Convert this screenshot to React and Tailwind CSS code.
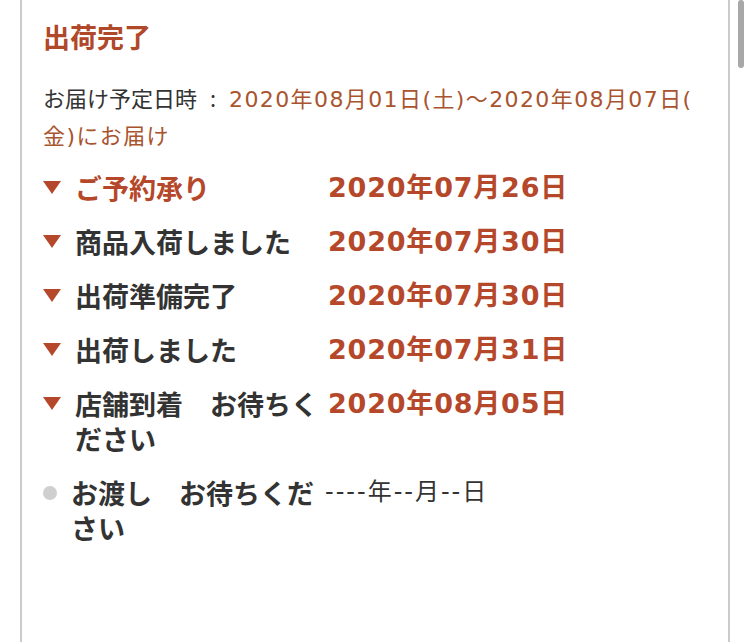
import React from "react";

const steps = [
  { label: "ご予約承り", date: "2020年07月26日", active: true, current: true },
  { label: "商品入荷しました", date: "2020年07月30日", active: true },
  { label: "出荷準備完了", date: "2020年07月30日", active: true },
  { label: "出荷しました", date: "2020年07月31日", active: true },
  { label: "店舗到着　お待ちください", date: "2020年08月05日", active: true },
  { label: "お渡し　お待ちください", date: "----年--月--日", active: false },
];

// wide latin digits first, CJK glyphs fall through to Noto
const numFont = { fontFamily: '"DejaVu Sans", "Noto Sans CJK JP", sans-serif' };

function Marker({ active }) {
  if (active) {
    return (
      <svg width="18" height="13" viewBox="0 0 18 13" className="mt-[11px] shrink-0">
        <polygon points="0,0 18,0 9,13" fill="#b5482a" />
      </svg>
    );
  }
  return <span className="mt-[11px] block h-[14px] w-[14px] shrink-0 rounded-full bg-[#cfcfcf]" />;
}

export default function App() {
  return (
    <div
      className="relative min-h-[642px] bg-white"
      style={{ fontFamily: '"Noto Sans CJK JP", "Noto Sans", sans-serif' }}
    >
      <div className="ml-[20px] min-h-[642px] w-[710px] border-x-2 border-[#cbcbcb] pl-[21px] pr-[20px]">
        <h1 className="pt-[19px] text-[27px] font-bold leading-[36px] text-[#b0482a]">出荷完了</h1>

        <p className="mt-[25px] text-[22px] leading-[35px] text-[#333]">
          お届け予定日時
          <span className="inline-block w-[32px] text-center">:</span>
          <span className="tracking-[1.4px] text-[#a9542f]" style={numFont}>
            2020年08月01日(土)〜2020年08月07日(
            <br />
            金)にお届け
          </span>
        </p>

        <ul className="mt-[16px] flex flex-col gap-[19px]">
          {steps.map((s, i) => (
            <li key={i} className="flex">
              <div className="flex w-[285px] shrink-0 gap-[14px]">
                <Marker active={s.active} />
                <span
                  className={`w-[253px] text-[27px] font-bold leading-[35px] ${
                    s.current ? "text-[#b5482a]" : "text-[#333]"
                  }`}
                >
                  {s.label}
                </span>
              </div>
              {s.active ? (
                <span
                  className="text-[27px] font-bold leading-[35px] tracking-[0.8px] text-[#b5482a]"
                  style={numFont}
                >
                  {s.date}
                </span>
              ) : (
                <span
                  className="-ml-[3px] text-[24px] leading-[35px] tracking-[2px] text-[#333]"
                  style={numFont}
                >
                  {s.date}
                </span>
              )}
            </li>
          ))}
        </ul>
      </div>

      <div className="absolute right-[6px] top-0 h-[68px] w-[6px] rounded-full bg-[#a8a8a8]" />
    </div>
  );
}
